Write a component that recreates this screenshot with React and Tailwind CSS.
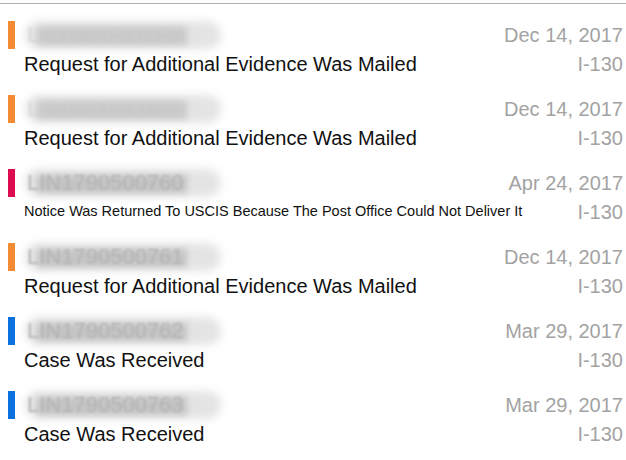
import React from 'react';

const CASES = [
  { id: 'LIN1790500758', color: 'bg-[#f28b32]', date: 'Dec 14, 2017', status: 'Request for Additional Evidence Was Mailed', heavy: true },
  { id: 'LIN1790500759', color: 'bg-[#f28b32]', date: 'Dec 14, 2017', status: 'Request for Additional Evidence Was Mailed', heavy: true },
  { id: 'LIN1790500760', color: 'bg-[#dc0c4e]', date: 'Apr 24, 2017', status: 'Notice Was Returned To USCIS Because The Post Office Could Not Deliver It', small: true },
  { id: 'LIN1790500761', color: 'bg-[#f28b32]', date: 'Dec 14, 2017', status: 'Request for Additional Evidence Was Mailed' },
  { id: 'LIN1790500762', color: 'bg-[#0b70e0]', date: 'Mar 29, 2017', status: 'Case Was Received' },
  { id: 'LIN1790500763', color: 'bg-[#0b70e0]', date: 'Mar 29, 2017', status: 'Case Was Received' },
];

// receipt number is redacted in the picture, so draw it blurred
const BlurredId = ({ id, heavy }) => (
  <div className="relative w-[196px] h-[28px]">
    <div className="absolute left-[0px] top-[0px] w-[196px] h-[28px] rounded-full bg-[#e4e4e4] blur-[4px]" />
    <div className={`absolute left-[12px] top-[6px] w-[150px] h-[18px] blur-[3px] ${heavy ? 'bg-[#c9c9c9]' : 'bg-[#c4c4c4]'}`} />
    <span className={`absolute left-[2px] top-[0px] text-[22px] leading-[28px] blur-[1px] ${heavy ? 'text-[#cfcfcf]/60' : 'text-[#b4b4b4]'}`}>{id}</span>
  </div>
);

export default function App() {
  return (
    <div className="w-[626px] h-[460px] bg-white overflow-hidden pt-[3px]" style={{ fontFamily: '"Liberation Sans", Arial, sans-serif' }}>
      <div className="border-t border-[#b0b0b0]">
        {CASES.map((c, i) => (
          <div key={i} className="h-[74px] pt-[17px] pl-[8px] pr-[3px]">
            <div className="flex items-center h-[28px]">
              <div className={`w-[7px] h-[28px] ${c.color}`} />
              <div className="ml-[10px]">
                <BlurredId id={c.id} heavy={c.heavy} />
              </div>
              <div className="ml-auto text-[20px] text-[#a3a3a3]">{c.date}</div>
            </div>
            <div className="flex items-center h-[30px] pl-[16px]">
              <div className={`${c.small ? 'text-[14.5px]' : 'text-[20px]'} text-[#111]`}>{c.status}</div>
              <div className="ml-auto text-[20px] text-[#a3a3a3]">I-130</div>
            </div>
          </div>
        ))}
      </div>
    </div>
  );
}
